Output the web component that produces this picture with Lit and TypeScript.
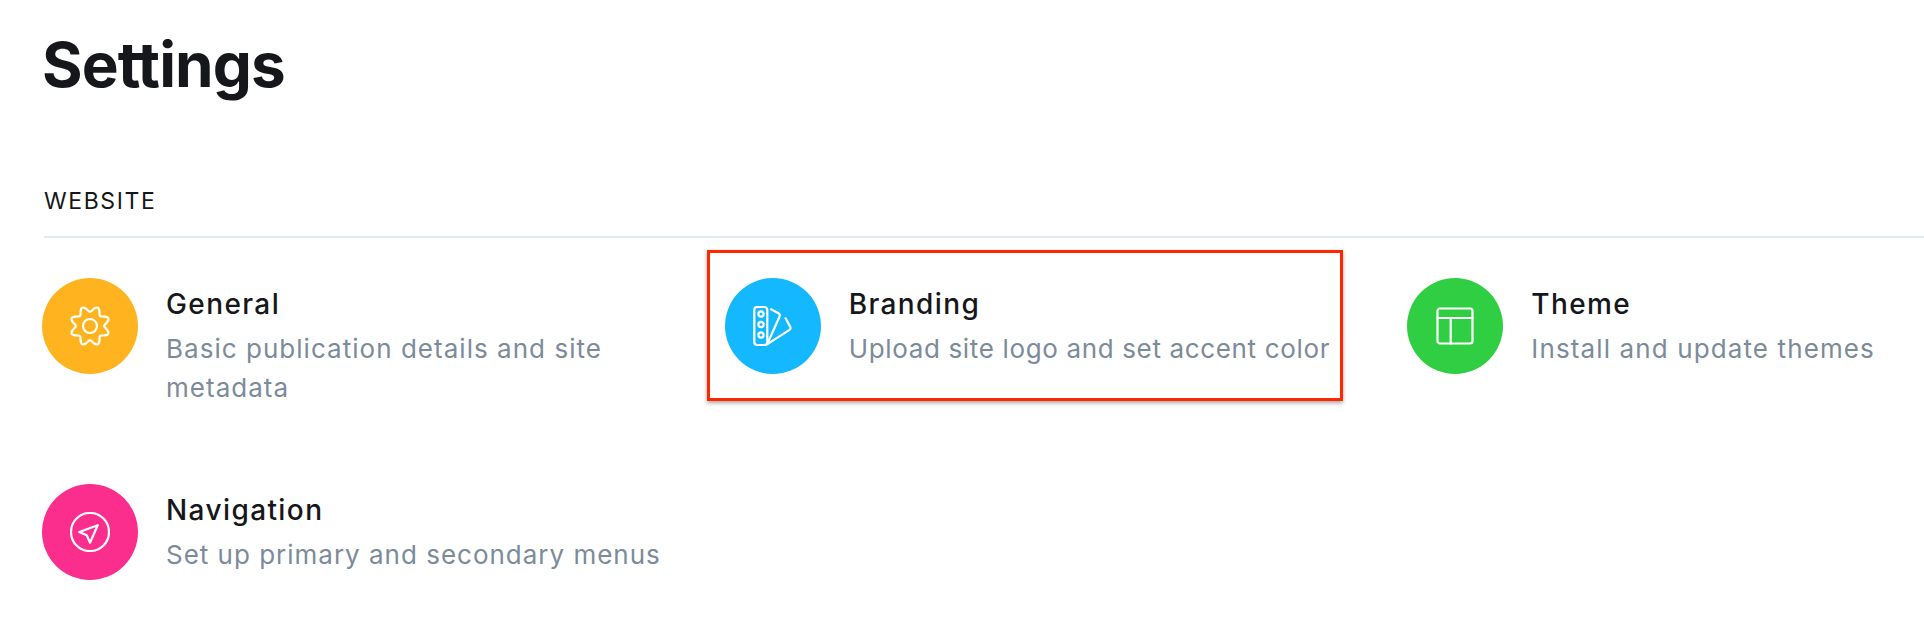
import { LitElement, html, css, svg } from "lit";
import { customElement } from "lit/decorators.js";

function gearPath(): string {
  const pts: string[] = [];
  const n = 144;
  for (let i = 0; i < n; i++) {
    const t = (i / n) * Math.PI * 2;
    const r = 17 - 2.8 * Math.cos(8 * t);
    const x = 20 + r * Math.sin(t);
    const y = 20 - r * Math.cos(t);
    pts.push(`${x.toFixed(2)} ${y.toFixed(2)}`);
  }
  return "M" + pts.join("L") + "Z";
}

const icons = {
  gear: svg`<path d=${gearPath()}/><circle cx="20" cy="20" r="7"/>`,
  brand: svg`<rect x="1.3" y="1" width="13" height="38" rx="3"/><circle cx="8" cy="8" r="2.6"/><circle cx="8" cy="18.5" r="2.6"/><circle cx="8" cy="29" r="2.6"/><path d="M18 3.3l7.5 4a2.5 2.5 0 0 1 1.1 3.2L15.6 35"/><path d="M32.6 12.3l4.6 8.4a2.5 2.5 0 0 1-.7 3.2L12 39.6"/>`,
  theme: svg`<rect x="2.5" y="2.5" width="35" height="35" rx="2.5"/><path d="M2.5 12h35M15.7 12v25.5"/>`,
  nav: svg`<circle cx="20" cy="20" r="19"/><path d="M27.7 13.3L9.3 20l7.4 3.3L20 30.7z"/>`,
};

const items = [
  { title: "General", desc: "Basic publication details and site metadata", track: 1.03, color: "#ffb41f", icon: icons.gear, mark: false },
  { title: "Branding", desc: "Upload site logo and set accent color", track: 0.65, color: "#14b8ff", icon: icons.brand, mark: true },
  { title: "Theme", desc: "Install and update themes", track: 1.12, color: "#30cf43", icon: icons.theme, mark: false },
  { title: "Navigation", desc: "Set up primary and secondary menus", track: 0.99, color: "#fb2d8d", icon: icons.nav, mark: false },
];

@customElement("app-root")
export class AppRoot extends LitElement {
  static styles = css`
    :host {
      display: block;
      width: 1924px;
      height: 638px;
      overflow: hidden;
      background: #fff;
      font-family: Inter, "Liberation Sans", sans-serif;
      color: #15171a;
    }
    .page {
      padding: 25px 0 0 44px;
    }
    h1 {
      margin: 0 0 0 -2px;
      font-size: 62px;
      line-height: 80px;
      font-weight: 700;
      letter-spacing: -0.9px;
    }
    .section {
      margin: 79px 0 0;
      padding-bottom: 18px;
      border-bottom: 2px solid #e5eaef;
      font-size: 23px;
      line-height: 34px;
      font-weight: 400;
      letter-spacing: 1.6px;
    }
    .grid {
      display: grid;
      grid-template-columns: repeat(3, 682.67px);
      grid-auto-rows: 206px;
      margin-left: -2px;
    }
    .card {
      position: relative;
      display: flex;
      gap: 28px;
      padding: 40px 40px 0 0;
      box-sizing: border-box;
    }
    .dot {
      flex: none;
      width: 96px;
      height: 96px;
      border-radius: 50%;
      display: flex;
      align-items: center;
      justify-content: center;
    }
    .dot svg {
      width: 40px;
      height: 40px;
      fill: none;
      stroke: #fff;
      stroke-width: 2.2;
      stroke-linecap: round;
      stroke-linejoin: round;
    }
    .text {
      padding-top: 8px;
    }
    .title {
      font-size: 28px;
      line-height: 36px;
      font-weight: 550;
      letter-spacing: 1.4px;
    }
    .desc {
      margin-top: 7px;
      font-size: 26px;
      line-height: 39px;
      color: #7c8b9a;
    }
    .mark {
      position: absolute;
      left: -18px;
      top: 12px;
      width: 636px;
      height: 151px;
      box-sizing: border-box;
      border: 3px solid #ff2600;
      box-shadow: 0 2px 4px rgba(0, 0, 0, 0.35);
      pointer-events: none;
    }
  `;

  render() {
    return html`
      <div class="page">
        <h1>Settings</h1>
        <div class="section">WEBSITE</div>
        <div class="grid">
          ${items.map(
            (it) => html`
              <div class="card">
                <div class="dot" style="background:${it.color}">
                  <svg viewBox="0 0 40 40">${it.icon}</svg>
                </div>
                <div class="text">
                  <div class="title">${it.title}</div>
                  <div class="desc" style="letter-spacing:${it.track}px">${it.desc}</div>
                </div>
                ${it.mark ? html`<div class="mark"></div>` : ""}
              </div>
            `
          )}
        </div>
      </div>
    `;
  }
}
